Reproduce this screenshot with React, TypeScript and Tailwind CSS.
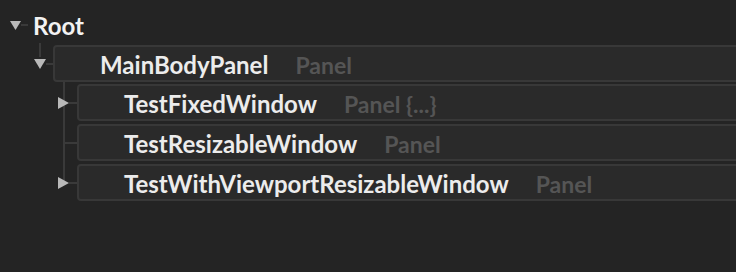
import React from "react";

type Node = { name: string; type: string; arrow?: "right" | "none" };

const children: Node[] = [
  { name: "TestFixedWindow", type: "Panel {...}", arrow: "right" },
  { name: "TestResizableWindow", type: "Panel", arrow: "none" },
  { name: "TestWithViewportResizableWindow", type: "Panel", arrow: "right" },
];

function DownTri({ w = 12, h = 10 }: { w?: number; h?: number }) {
  return (
    <svg width={w} height={h} viewBox={`0 0 ${w} ${h}`} className="relative shrink-0">
      <path d={`M0 0H${w}L${w / 2} ${h}Z`} fill="#b9b9b9" />
    </svg>
  );
}

function RightTri() {
  return (
    <svg width="11" height="12" viewBox="0 0 11 12" className="relative shrink-0">
      <path d="M0 0L11 6L0 12Z" fill="#b9b9b9" />
    </svg>
  );
}

function Box({ name, type }: { name: string; type: string }) {
  return (
    <div className="flex-1 h-[37px] border-2 border-[#383838] rounded-[4px] bg-[#2a2a2a] flex items-center pl-[45px] pt-[3px] whitespace-nowrap">
      <span className="text-[#ececec]">{name}</span>
      <span className="ml-[27px] text-[23px] text-[#555555]">{type}</span>
    </div>
  );
}

export default function App() {
  return (
    <div className="w-[736px] h-[272px] bg-[#242424] overflow-hidden font-['Lato',sans-serif] font-bold text-[24px] leading-none">
      <div className="w-[780px]">
        {/* Root */}
        <div className="flex items-center h-[36px] mt-[7px] pl-[10px]">
          <DownTri w={11} h={9} />
          <div className="w-[7px] h-[2px] bg-[#3a3a3a]" />
          <span className="ml-[5px] pt-[2px] text-[#f2f2f2]">Root</span>
        </div>

        {/* MainBodyPanel */}
        <div className="flex pt-[2px]">
          <div className="relative w-[53px] shrink-0">
            <div className="absolute left-[39px] top-[-2px] w-[2px] h-[14px] bg-[#3a3a3a]" />
            <div className="h-full flex items-center justify-end">
              <DownTri />
              <div className="w-[7px] h-[2px] bg-[#3a3a3a]" />
            </div>
          </div>
          <Box name="MainBodyPanel" type="Panel" />
        </div>

        {/* children */}
        <div className="relative flex flex-col gap-[3px] pt-[2px]">
          <div className="absolute left-[63px] top-0 w-[2px] h-[103px] bg-[#3a3a3a]" />
          {children.map((c) => (
            <div key={c.name} className="flex">
              <div className="w-[77px] shrink-0 flex items-center justify-end">
                {c.arrow === "right" ? (
                  <>
                    <RightTri />
                    <div className="w-[8px] h-[2px] bg-[#3a3a3a]" />
                  </>
                ) : (
                  <div className="w-[12px] h-[2px] bg-[#3a3a3a]" />
                )}
              </div>
              <Box name={c.name} type={c.type} />
            </div>
          ))}
        </div>
      </div>
    </div>
  );
}
